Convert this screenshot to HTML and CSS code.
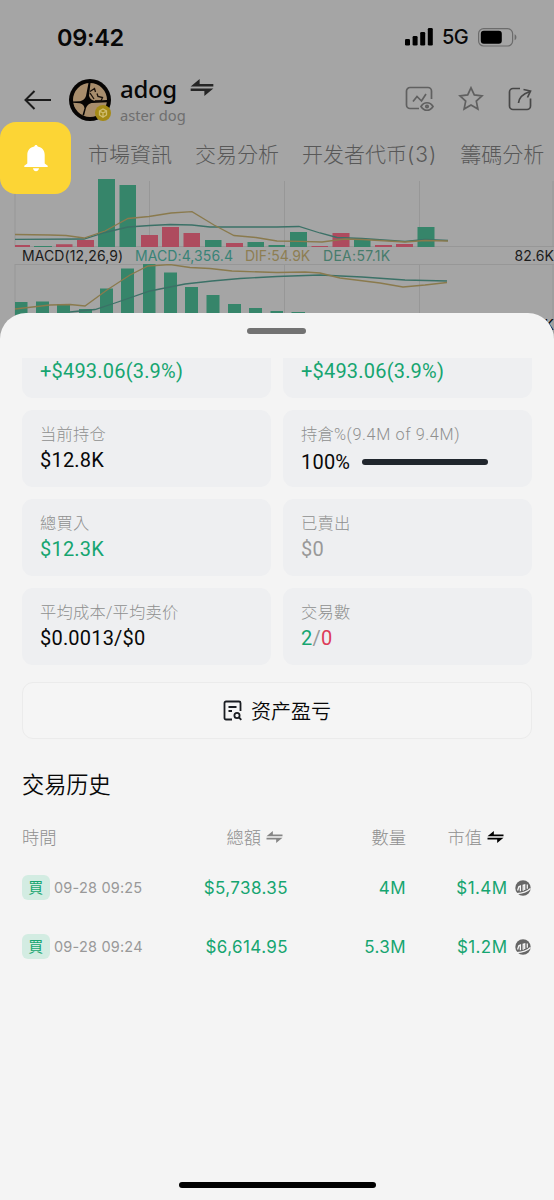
FILE: index.html
```html
<!DOCTYPE html>
<html lang="zh-Hant">
<head>
<meta charset="utf-8">
<title>adog</title>
<link rel="stylesheet" href="styles.css">
</head>
<body>
<svg class="defs" width="0" height="0">
  <symbol id="swap" viewBox="0 0 24 18">
    <path d="M0 8 9.500 0v5.300H24V8zM24 10 14.500 18v-5.300H0V10z"/>
  </symbol>
  <symbol id="maker" viewBox="0 0 16 16">
    <circle cx="8" cy="8" r="7.700" fill="#666"/>
    <path d="M2.600 10.500 3.800 6.800 5.400 6v5.300M8.200 10.800V5.300l1.500-.5v5.300M12.300 8.800V4.500" fill="none" stroke="#f4f4f4" stroke-width="1.300"/>
    <path d="M1.500 13.600C6.500 13.400 11.500 12.500 15.500 8.500" fill="none" stroke="#f4f4f4" stroke-width="1.200"/>
  </symbol>
</svg>
<div class="screen">
  <div class="status">
    <span class="clock">09:42</span>
    <svg class="signal" viewBox="0 0 28 18"><rect y="11" width="5" height="6.5" rx="1.3"/><rect x="7.6" y="8" width="5" height="9.5" rx="1.3"/><rect x="15.2" y="4" width="5" height="13.5" rx="1.3"/><rect x="22.8" width="5" height="17.5" rx="1.3"/></svg>
    <span class="net">5G</span>
    <svg class="battery" viewBox="0 0 39 19"><rect x=".6" y=".6" width="34" height="17.4" rx="5" fill="none" stroke="#6c6c6c" stroke-width="1.2"/><rect x="2.8" y="2.8" width="21" height="13" rx="3"/><path d="M36.6 6.3c2.4.8 2.4 5.2 0 6z" fill="#6c6c6c"/></svg>
  </div>
  <header class="header">
    <svg class="back" viewBox="0 0 28 20"><path d="M27 10H2M10.5 1 1.5 10l9 9" fill="none" stroke="#1c1c1c" stroke-width="2"/></svg>
    <div class="avatar">
      <svg viewBox="0 0 42 42">
        <circle cx="21" cy="21" r="21" fill="#070504"/>
        <circle cx="21" cy="21" r="17" fill="#a88d6c"/>
        <path d="M19.500 4 17 17q-1.500 4.500-6 5.200L4 22.500v1.200l7 .5q4 1 4.500 5L13.500 36l1.500.8 2-7.800q1.500-4 5.500-5L38 23.300V21l-13 .8q-4-1-5-5L21.500 4z" fill="#070504"/>
        <path d="M21 12.500 25.500 9.500l1 3.500M28 14.500l1 3 4.500 1-1.500 3.500h-6M21 14l4 6" fill="none" stroke="#19110b" stroke-width="1.300"/>
      </svg>
      <svg class="chain" viewBox="0 0 16 16"><circle cx="8" cy="8" r="8" fill="#a58a16"/><path d="M4.500 6 8 4l3.500 2v4L8 12.200 4.500 10zM4.500 6 8 8l3.500-2M8 8v4" fill="none" stroke="#d0bd70" stroke-width="1.300"/></svg>
    </div>
    <div class="title">
      <div class="name">adog <svg class="swap"><use href="#swap"/></svg></div>
      <div class="sub">aster dog</div>
    </div>
    <div class="actions">
      <svg width="30" height="26" viewBox="0 0 30 26"><path d="M14 22.500H5a3.500 3.500 0 0 1-3.500-3.500V5A3.500 3.500 0 0 1 5 1.500h18A3.500 3.500 0 0 1 26.500 5v8M8 15.500l4-5 4.500 4.500L21 8M16 20.500c3-5 9-5 12 0-3 5-9 5-12 0z"/><circle cx="22" cy="20.500" r="1.200"/></svg>
      <svg width="26" height="26" viewBox="0 0 26 26"><path d="m13 1.800 3.300 7.100 7.700.9-5.700 5.300 1.600 7.900-6.900-4-6.900 4 1.600-7.900L2 9.800l7.700-.9z"/></svg>
      <svg class="share" width="26" height="26" viewBox="0 0 26 26"><path d="M13 2.500H6A3.500 3.500 0 0 0 2.500 6v14A3.500 3.500 0 0 0 6 23.500h14a3.500 3.500 0 0 0 3.500-3.500v-7.500M11.500 17c.5-5 4-9 11.500-11.500M16.500 3.500 23.500 5l-3 6.500"/></svg>
    </div>
  </header>
  <nav class="tabs"><span>市場資訊</span><span>交易分析</span><span>开发者代币<em>(3)</em></span><span>籌碼分析</span></nav>
  <svg class="volume" viewBox="0 176 554 71">
    <path class="grid" d="M15 181v66M149.500 181v66M284.500 181v66M419.500 181v66M553 181v66M15 246.500h539"/>
    <path class="up" d="M34 246h18v1H34zM98 179h17v68H98zM119.500 185H136v62h-16.500zM205 240h16.500v7H205zM247.500 242H264v5h-16.500zM268.500 245H285v2h-16.500zM290 232h17v15h-17zM354 240h16.500v7H354zM417.500 227h17v20h-17z"/>
    <path class="down" d="M15 245h15v2H15zM56 244.300h16.500v2.700H56zM77 240h17v7H77zM141 235h17v12h-17zM162 227h17v20h-17zM183.500 233H200v14h-16.500zM226 243h17v4h-17zM311.500 246H328v1h-16.500zM332.500 233h17v14h-17zM375 245h17v2h-17zM396 244h17v3h-17z"/>
    <path class="teal" d="M15 239.300 84 239l21-6.500 23-5.500 22-1.500 20-1 22 .5 18 2h67l22-.5 21 6.500 17 4.500 25 1 43 3 20-2 23 1"/>
    <path class="gold" d="m15 234.500 35 .5 16 .5 18 2.500 21-7 23-12.500 21-2 22-3.500 21-1.300 22 13.300 20 10.500 22 2 21 3.500 23 .3 22 .7 23-3 17 .5 43 2.500 20-1.500 23 .5"/>
  </svg>
  <div class="legend"><span class="l0">MACD(12,26,9)</span><span class="l1">MACD:4,356.4</span><span class="l2">DIF:54.9K</span><span class="l3">DEA:57.1K</span><span class="l4">82.6K</span></div>
  <svg class="macd" viewBox="0 264 554 70">
    <path class="grid" d="M15 264v70M149.500 264v70M284.500 264v70M419.500 264v70M553 264v70M15 264.500h539"/>
    <path class="up" d="M15 302h12.500v32H15zM36 301.500h13V334H36zM57 304h13v30H57zM79 309h13v25H79zM100 288.500h13V334h-13zM121 268.500h13V334h-13zM143 264h12.500v70H143zM164 272.500h13V334h-13zM185 287h13v47h-13zM206.500 295h13v39h-13zM228 304h13v30h-13zM249 308h13v26h-13zM270.500 311H283v23h-12.500zM291.500 312H305v22h-13.500z"/>
    <path class="teal" d="m70 312 25-2.500 20-6.500 35-12 35-7 27-3 28-2.500 37-2 43-1.500 42 2 43 3 42 1"/>
    <path class="gold" d="m15 309 35-4 20-.5 15 1.500 22-16 23-15 18-9 22-1.500 20 3 20 1 22 2.500 45 1.500 28-.5 15 1 20 5 40 5 23 4 22-2 22-2.500"/>
  </svg>

  <span class="axis">K</span>
  <div class="bell"><svg viewBox="0 0 24 27"><path d="M12 0c.9 0 1.500.6 1.700 1.600 4.300.8 7 4 7 8.400v8.500l3 2.300V22H.3v-1.200l3-2.300V10c0-4.400 2.700-7.600 7-8.400C10.500.6 11.100 0 12 0zM9 23.300h6c-.3 1.900-1.500 3-3 3s-2.700-1.100-3-3z" fill="#fff"/></svg></div>

  <main class="sheet">
    <div class="handle"></div>
    <div class="viewport">
      <div class="cards">
        <div class="card cut"><div class="val green">+$493.06(3.9%)</div></div>
        <div class="card cut"><div class="val green">+$493.06(3.9%)</div></div>
        <div class="card"><div class="lab">当前持仓</div><div class="val">$12.8K</div></div>
        <div class="card"><div class="lab">持倉<em>%(9.4M of 9.4M)</em></div><div class="val meter">100%<i></i></div></div>
        <div class="card"><div class="lab">總買入</div><div class="val green">$12.3K</div></div>
        <div class="card"><div class="lab">已賣出</div><div class="val grey">$0</div></div>
        <div class="card"><div class="lab">平均成本/平均卖价</div><div class="val">$0.0013/$0</div></div>
        <div class="card"><div class="lab">交易數</div><div class="val"><span class="green">2</span><span class="grey">/</span><span class="red">0</span></div></div>
      </div>
    </div>
    <div class="pnl"><svg viewBox="0 0 20 21"><path d="M9 19.500H3A1.500 1.500 0 0 1 1.500 18V3A1.500 1.500 0 0 1 3 1.500h13A1.500 1.500 0 0 1 17.500 3v8M5.500 7h8M5.500 11H9M16 17.500l2.300 2.300"/><circle cx="14" cy="15.500" r="2.600"/></svg><span>资产盈亏</span></div>
    <h2>交易历史</h2>
    <div class="row head"><span>時間</span><span class="c2">總額<svg><use href="#swap"/></svg></span><span>數量</span><span class="c4">市值<svg class="black"><use href="#swap"/></svg></span></div>
    <div class="row"><span><b>買</b><time>09-28 09:25</time></span><span>$5,738.35</span><span>4M</span><span>$1.4M<svg class="mk"><use href="#maker"/></svg></span></div>
    <div class="row"><span><b>買</b><time>09-28 09:24</time></span><span>$6,614.95</span><span>5.3M</span><span>$1.2M<svg class="mk"><use href="#maker"/></svg></span></div>
    <div class="home"></div>
  </main>
</div>
</body>
</html>
```
FILE: styles.css
```css
* { box-sizing: border-box; }
body { margin: 0; background: #a5a5a5; font-family: Inter, "Noto Sans CJK TC", sans-serif; color: #080808; }
svg { display: block; flex: none; }
em { font-style: normal; }
.defs { position: absolute; }
.screen { position: relative; width: 554px; height: 1200px; overflow: hidden; background: #a5a5a5; }

.status { display: flex; align-items: center; height: 74px; padding: 0 37px 0 57px; }
.clock { font-size: 23.500px; font-weight: 600; letter-spacing: -0.3px; margin-right: auto; }
.signal { width: 28px; height: 18px; margin-right: 9px; }
.net { font-size: 20px; font-weight: 500; width: 27px; letter-spacing: -0.5px; margin-right: 9px; }
.battery { width: 39px; height: 19px; }

.header { display: flex; align-items: center; height: 51px; padding: 0 21px 0 24px; }
.back { width: 28px; height: 20px; margin-right: 17px; }
.avatar { position: relative; width: 42px; height: 42px; margin-right: 9px; }
.chain { position: absolute; right: 0; bottom: 0; width: 16px; height: 16px; }
.name { display: flex; align-items: center; font: 500 24px/31px "Noto Sans", sans-serif; letter-spacing: -0.3px; }
.swap { width: 24px; height: 17px; margin: -2px 0 0 13px; fill: #262626; }
.sub { font: 14.700px/23px "Noto Sans", sans-serif; color: #6f6f6f; }
.actions { display: flex; gap: 23px; margin-left: auto; margin-top: -1px; }
.actions svg { fill: none; stroke: #606060; stroke-width: 1.7; }
.actions .share { stroke: #474747; }

.tabs { display: flex; gap: 23px; height: 51px; padding: 14px 0 0 88px; font: 300 21px/31px Inter, "Noto Sans CJK SC", sans-serif; color: #585858; white-space: nowrap; }
.tabs em { letter-spacing: 1px; }
.volume { width: 554px; height: 71px; }
.grid { stroke: #979797; fill: none; }
.up { fill: #36856a; }
.down { fill: #ae4b5e; }
.teal, .gold { fill: none; stroke: #3b7167; stroke-width: 1.3; }
.gold { stroke: #8a7a4d; }
.legend { display: flex; height: 17px; padding-left: 22px; font-size: 14px; line-height: 18px; white-space: nowrap; }
.l0 { width: 113px; letter-spacing: 0.1px; color: #1c1c1c; }
.l1 { width: 110px; color: #398377; letter-spacing: 0.1px; }
.l2 { width: 78px; color: #8d7e53; }
.l3 { color: #477c6c; letter-spacing: 0.3px; }
.l4 { margin-left: auto; letter-spacing: 0.1px; color: #1c1c1c; }
.macd { width: 554px; height: 70px; }
.axis { position: absolute; right: 0; top: 316px; font-size: 14px; line-height: 18px; }

.bell { position: absolute; left: 0; top: 122px; width: 71px; height: 72px; border-radius: 16px; background: #fcd535; display: grid; place-items: center; }
.bell svg { width: 24px; height: 27px; }

.sheet { position: absolute; left: 0; top: 313px; width: 554px; height: 887px; padding: 0 22px; border-radius: 26px 26px 0 0; background: #f4f4f4; display: flex; flex-direction: column; }
.handle { width: 59px; height: 6px; margin: 15px 0 24px 225px; border-radius: 3px; background: #727272; }
.viewport { height: 307px; overflow: hidden; }
.cards { display: grid; grid-template-columns: 249px 249px; grid-template-rows: 40px 77px 77px 77px; gap: 12px; }
.card { padding: 13px 18px 0; border-radius: 11px; background: #eeeff1; }
.cut { padding-top: 0; border-radius: 0 0 11px 11px; }
.lab { font: 300 16.300px/24px Roboto, "Noto Sans CJK SC", sans-serif; color: #8f8f8f; white-space: nowrap; letter-spacing: 0.2px; }
.lab em { letter-spacing: 0.6px; }
.val { font: 20px/26px Roboto, sans-serif; letter-spacing: 0.2px; }
.meter { display: flex; align-items: center; gap: 12px; padding-top: 2px; }
.meter i { width: 126px; height: 6px; border-radius: 3px; background: #20262d; }
.green { color: #16a570; }
.grey { color: #999; }
.red { color: #dd3a58; }

.pnl { display: flex; align-items: center; justify-content: center; gap: 8px; height: 57px; margin-top: 17px; border: 1px solid #ebebeb; border-radius: 11px; background: #f5f5f5; font: 350 20px/30px "Noto Sans CJK SC", sans-serif; }
.pnl svg { width: 20px; height: 21px; fill: none; stroke: #1a1d22; stroke-width: 1.8; }
h2 { margin: 28px 0 0; font: 350 22.200px/32px "Noto Sans CJK SC", sans-serif; }

.row { display: grid; grid-template-columns: 140px 126px 118px 125px; align-items: center; height: 59px; font-size: 17px; letter-spacing: 0.4px; color: #16a570; }
.row > span { display: flex; align-items: center; justify-content: flex-end; white-space: nowrap; }
.row > span:first-child { justify-content: flex-start; }
.head { height: 42px; margin-top: 17px; font: 300 17.300px/26px "Noto Sans CJK TC", sans-serif; letter-spacing: 0; color: #8f8f8f; }
.head svg { width: 17px; height: 12px; margin-left: 5px; fill: #858585; }
.head .black { fill: #000; }
.head .c2 { padding-right: 5px; }
.head .c4 { padding-right: 27px; }
.row b { width: 28px; height: 25px; margin-right: 4px; border-radius: 6px; background: #d3ece2; font: 400 15px/24px "Noto Sans CJK TC", sans-serif; text-align: center; }
.row time { font-size: 14.500px; letter-spacing: 0.2px; color: #999; }
.mk { width: 16px; height: 16px; margin-left: 7.600px; }
.home { position: absolute; left: 179px; bottom: 12px; width: 197px; height: 6px; border-radius: 3px; background: #000; }
```
